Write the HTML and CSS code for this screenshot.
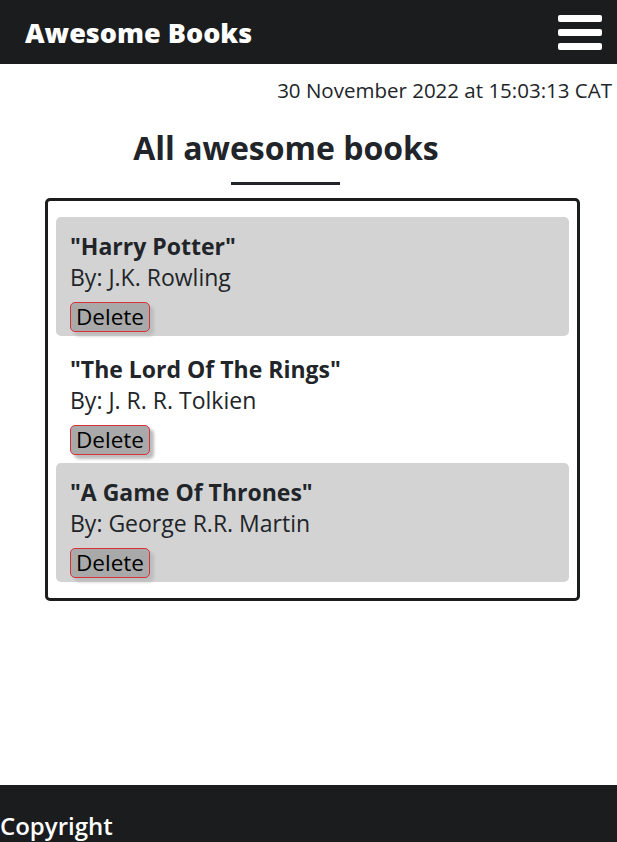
FILE: index.html
```html
<!DOCTYPE html>
<html lang="en">
<head>
<meta charset="utf-8">
<title>Awesome Books</title>
<link rel="stylesheet" href="styles.css">
</head>
<body>
<header class="topbar">
  <h1 class="brand">Awesome Books</h1>
  <button class="menu" aria-label="Menu">
    <span class="bar"></span><span class="bar"></span><span class="bar"></span>
  </button>
</header>
<p class="date">30 November 2022 at 15:03:13 CAT</p>
<main class="content">
  <h2 class="title">All awesome books</h2>
  <div class="rule"></div>
  <ul class="books">
    <li class="book grey">
      <p class="book-title">"Harry Potter"</p>
      <p class="book-author">By: J.K. Rowling</p>
      <button class="delete">Delete</button>
    </li>
    <li class="book">
      <p class="book-title">"The Lord Of The Rings"</p>
      <p class="book-author">By: J. R. R. Tolkien</p>
      <button class="delete">Delete</button>
    </li>
    <li class="book grey">
      <p class="book-title">"A Game Of Thrones"</p>
      <p class="book-author">By: George R.R. Martin</p>
      <button class="delete">Delete</button>
    </li>
  </ul>
</main>
<footer class="footer">
  <p class="copy">Copyright</p>
</footer>
</body>
</html>
```

FILE: styles.css
```css
* { box-sizing: border-box; }
html, body { height: 100%; }
body {
  margin: 0;
  font-family: "Open Sans", "Noto Sans", sans-serif;
  color: #212529;
  background: #fff;
  display: flex;
  flex-direction: column;
  min-height: 842px;
}
.topbar {
  height: 64px;
  flex-shrink: 0;
  background: #1a1c1e;
  display: flex;
  align-items: center;
  justify-content: space-between;
  padding: 0 15px 0 25px;
}
.brand {
  margin: 0;
  color: #fff;
  font-size: 27px;
  font-weight: 800;
}
.menu {
  background: none;
  border: 0;
  padding: 0;
  display: flex;
  flex-direction: column;
  gap: 7px;
}
.bar {
  display: block;
  width: 44px;
  height: 7px;
  background: #fff;
  border-radius: 2px;
}
.date {
  margin: 14px 5px 0 0;
  text-align: right;
  font-size: 20.5px;
  line-height: 24px;
}
.content {
  flex: 1;
  padding: 0 37px 0 45px;
}
.title {
  margin: 26px 0 0;
  width: 482px;
  text-align: center;
  font-size: 32px;
  font-weight: 700;
  line-height: 40px;
}
.rule {
  width: 109px;
  height: 3px;
  background: #212529;
  margin: 14px 0 0 186px;
}
.books {
  list-style: none;
  margin: 13px 0 0;
  padding: 16px 8px;
  border: 3px solid #1a1c1e;
  border-radius: 5px;
  display: flex;
  flex-direction: column;
  gap: 4px;
}
.book {
  height: 119px;
  padding: 14px 14px 0;
  border-radius: 5px;
}
.book.grey { background: #d3d3d3; }
.book-title {
  margin: 0;
  font-size: 23px;
  font-weight: 700;
  line-height: 30px;
}
.book-author {
  margin: 1px 0 0;
  font-size: 23px;
  line-height: 30px;
}
.delete {
  margin-top: 10px;
  height: 30px;
  font-family: inherit;
  font-size: 22.5px;
  line-height: 26px;
  color: #000;
  background: #a9a9a9;
  border: 1px solid #d9313a;
  border-radius: 5px;
  padding: 0 5px;
  box-shadow: 4px 4px 3px #bdbdbd;
}
.footer {
  height: 57px;
  flex-shrink: 0;
  background: #1a1c1e;
  padding-top: 26px;
}
.copy {
  margin: 0;
  color: #fff;
  font-size: 24px;
  font-weight: 600;
  line-height: 30px;
}
```
